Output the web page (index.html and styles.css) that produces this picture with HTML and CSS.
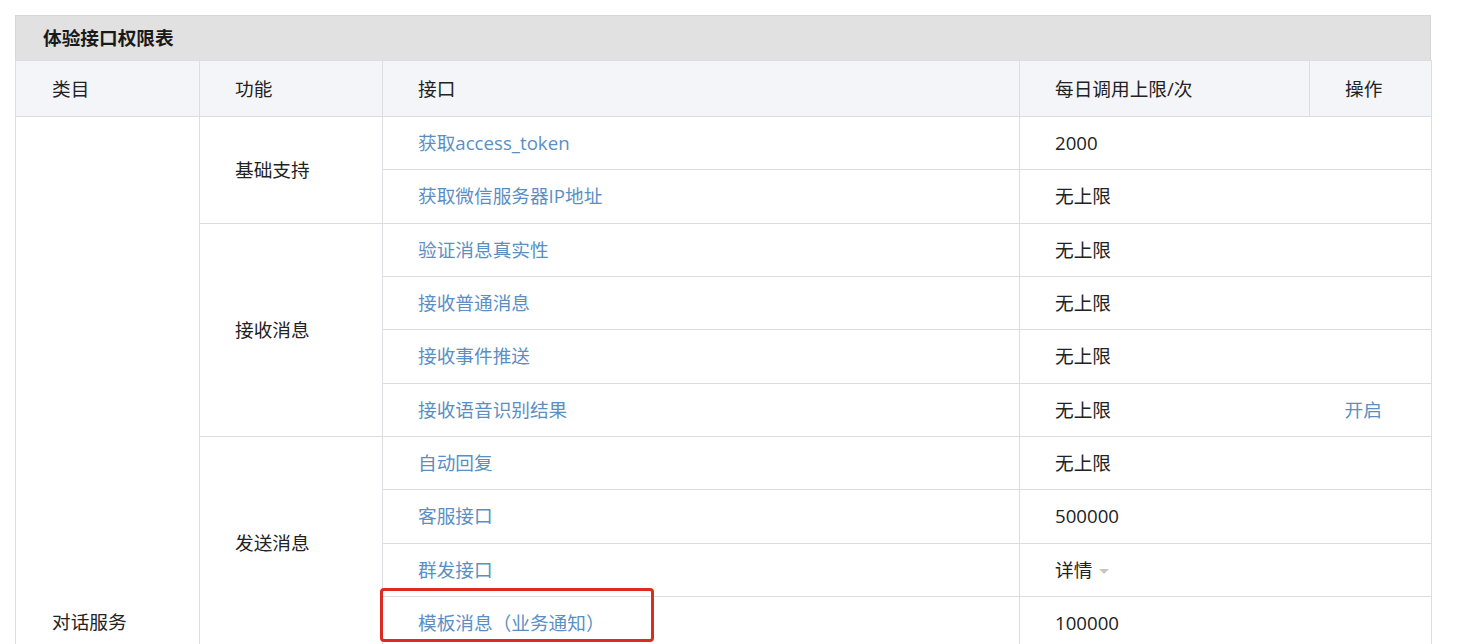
FILE: index.html
```html
<!DOCTYPE html>
<html lang="zh-CN">
<head>
<meta charset="utf-8">
<title>体验接口权限表</title>
<link rel="stylesheet" href="styles.css">
</head>
<body>
<div class="panel">
  <div class="panel-title">体验接口权限表</div>
  <table class="perm-table">
    <colgroup>
      <col class="c-cat"><col class="c-func"><col class="c-api"><col class="c-limit"><col class="c-op">
    </colgroup>
    <thead>
      <tr><th class="cat">类目</th><th>功能</th><th>接口</th><th>每日调用上限/次</th><th>操作</th></tr>
    </thead>
    <tbody>
      <tr>
        <td class="cat cat-body" rowspan="10">对话服务</td>
        <td rowspan="2">基础支持</td>
        <td><a class="link">获取access_token</a></td><td class="limit">2000</td><td class="op"></td>
      </tr>
      <tr><td><a class="link">获取微信服务器IP地址</a></td><td class="limit">无上限</td><td class="op"></td></tr>
      <tr>
        <td rowspan="4">接收消息</td>
        <td><a class="link">验证消息真实性</a></td><td class="limit">无上限</td><td class="op"></td>
      </tr>
      <tr><td><a class="link">接收普通消息</a></td><td class="limit">无上限</td><td class="op"></td></tr>
      <tr><td><a class="link">接收事件推送</a></td><td class="limit">无上限</td><td class="op"></td></tr>
      <tr><td><a class="link">接收语音识别结果</a></td><td class="limit">无上限</td><td class="op"><a class="link">开启</a></td></tr>
      <tr>
        <td rowspan="4">发送消息</td>
        <td><a class="link">自动回复</a></td><td class="limit">无上限</td><td class="op"></td>
      </tr>
      <tr><td><a class="link">客服接口</a></td><td class="limit">500000</td><td class="op"></td></tr>
      <tr><td><a class="link">群发接口</a></td><td class="limit">详情<span class="caret"></span></td><td class="op"></td></tr>
      <tr><td><a class="link">模板消息（业务通知）</a></td><td class="limit">100000</td><td class="op"></td></tr>
    </tbody>
  </table>
  <div class="highlight"></div>
</div>
</body>
</html>
```
FILE: styles.css
```css
html, body {
  margin: 0;
  padding: 0;
  background: #ffffff;
  overflow: hidden;
}

body {
  font-family: "Open Sans", "Noto Sans CJK SC", sans-serif;
  font-size: 18.67px;
  color: #222222;
}

.panel {
  position: relative;
  width: 1416px;
  margin: 15px 0 0 15px;
}

.panel-title {
  height: 44px;
  line-height: 44px;
  padding-left: 27px;
  background: #e1e1e1;
  border: 1px solid #d6d6d6;
  border-bottom: none;
  font-weight: bold;
  color: #1a1a1a;
}

.perm-table {
  width: 1416px;
  border-collapse: collapse;
  table-layout: fixed;
}

.c-cat { width: 184px; }
.c-func { width: 183px; }
.c-api { width: 637px; }
.c-limit { width: 290px; }
.c-op { width: 122px; }

.perm-table th,
.perm-table td {
  border: 1px solid #dcdde0;
  padding: 0 35px;
  text-align: left;
  vertical-align: middle;
  white-space: nowrap;
  line-height: 24px;
}

.perm-table th {
  height: 55px;
  background: #f4f5f9;
  font-weight: normal;
  color: #222222;
}

.perm-table .cat {
  padding-left: 36px;
}

.perm-table .cat-body {
  vertical-align: bottom;
  padding-bottom: 15px;
}

.perm-table tbody tr {
  height: 53.33px;
}

.perm-table td.limit {
  border-right-style: hidden;
}

.perm-table td.op {
  border-left-style: hidden;
}

.link {
  color: #5b8fc4;
  text-decoration: none;
  cursor: pointer;
}

.caret {
  display: inline-block;
  width: 0;
  height: 0;
  margin-left: 7px;
  vertical-align: middle;
  border-top: 5px solid #c6c6c6;
  border-left: 5px solid transparent;
  border-right: 5px solid transparent;
}

.highlight {
  position: absolute;
  left: 365px;
  top: 573px;
  width: 274px;
  height: 54px;
  box-sizing: border-box;
  border: 3.5px solid #dc2b21;
  border-radius: 4px;
  pointer-events: none;
}
```
